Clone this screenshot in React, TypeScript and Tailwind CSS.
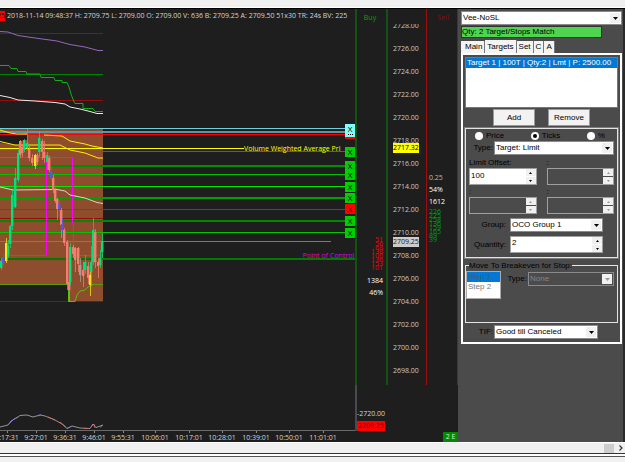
import { useState } from 'react';

type Candle = [x: number, high: number, low: number, top: number, bottom: number, color: string];

const UP = '#00e07c';
const DOWN = '#f47d72';
const YELLOW = '#f7e41c';
const BLUE = '#5b55f0';
const GRAY = '#a89c94';

const candles: Candle[] = [
  [1, 258, 270, 261, 268, UP],
  [3, 253, 266, 257, 264, BLUE],
  [6, 238, 263, 243, 261, YELLOW],
  [8, 240, 258, 246, 255, UP],
  [10, 225, 248, 226, 244, UP],
  [12, 190, 230, 195, 226, UP],
  [15, 168, 208, 178, 207, UP],
  [18, 150, 182, 153, 180, UP],
  [20, 140, 158, 141, 155, DOWN],
  [22, 145, 157, 147, 153, DOWN],
  [24, 139, 152, 140, 150, UP],
  [27, 129, 150, 143, 148, UP],
  [29, 146, 161, 149, 158, DOWN],
  [32, 154, 166, 158, 163, DOWN],
  [35, 154, 169, 155, 166, YELLOW],
  [37, 153, 165, 155, 162, DOWN],
  [39, 131, 157, 138, 152, UP],
  [42, 139, 160, 141, 152, DOWN],
  [44, 141, 163, 152, 158, DOWN],
  [47, 152, 170, 155, 162, UP],
  [49, 156, 172, 158, 170, DOWN],
  [51, 166, 182, 172, 178, BLUE],
  [53, 175, 193, 178, 190, DOWN],
  [55, 188, 203, 190, 201, DOWN],
  [57, 198, 220, 199, 209, DOWN],
  [59, 200, 219, 204, 209, BLUE],
  [61, 208, 238, 210, 225, DOWN],
  [62, 218, 234, 224, 230, BLUE],
  [64, 228, 246, 230, 243, DOWN],
  [67, 240, 290, 242, 284, DOWN],
  [69, 280, 302, 282, 290, DOWN],
  [70, 243, 285, 247, 282, UP],
  [73, 245, 258, 247, 254, DOWN],
  [75, 247, 272, 248, 260, DOWN],
  [78, 247, 272, 248, 264, DOWN],
  [80, 258, 282, 265, 275, GRAY],
  [83, 262, 287, 270, 276, DOWN],
  [85, 255, 274, 262, 270, UP],
  [88, 262, 284, 266, 278, DOWN],
  [90, 264, 296, 275, 285, YELLOW],
  [91, 246, 275, 262, 272, UP],
  [93, 218, 265, 230, 262, UP],
  [95, 229, 268, 232, 262, DOWN],
  [98, 258, 278, 262, 266, DOWN],
  [100, 250, 268, 258, 265, UP],
  [102, 233, 258, 241, 252, UP],
];

// y, thickness, color
const levels: [number, number, string][] = [
  [128, 1, '#6fd0dc'],
  [131, 2, '#5d97a3'],
  [134, 1, '#ff0000'],
  [151, 1, '#00a000'],
  [165, 2, '#008f00'],
  [174, 1, '#00c400'],
  [186, 1, '#00e800'],
  [197, 2, '#00a000'],
  [209, 1, '#e01010'],
  [220, 2, '#008a00'],
  [232, 1, '#00c800'],
  [258, 2, '#007a00'],
];

const cancelMarks = [
  { y: 147, color: 'bg-[#00d000]' },
  { y: 161, color: 'bg-[#00d000]' },
  { y: 170, color: 'bg-[#00d000]' },
  { y: 182, color: 'bg-[#00d000]' },
  { y: 193, color: 'bg-[#00d000]' },
  { y: 204, color: 'bg-[#ff0000]' },
  { y: 216, color: 'bg-[#00d000]' },
  { y: 228, color: 'bg-[#00d000]' },
];

const times: [number, string][] = [
  [7, '9:17:31'],
  [36, '9:27:01'],
  [65, '9:36:31'],
  [94, '9:46:01'],
  [123, '9:55:31'],
  [155, '10:06:01'],
  [189, '10:17:01'],
  [222, '10:28:01'],
  [256, '10:39:01'],
  [289, '10:50:01'],
  [323, '11:01:01'],
];

const prices = Array.from({ length: 16 }, (_, i) => (2728 - i * 2).toFixed(2));
const bidSizes = ['51', '56', '68', '138', '106', '136', '153', '101'];
const askSizes = ['226', '225', '258', '136', '159', '165', '89', '39'];

function Chart() {
  return (
    <div className="relative min-w-0 flex-1 overflow-hidden">
      <div className="flex h-[14px] items-center gap-[2px] whitespace-nowrap text-[7px] text-[#d4d4d4]">
        <span className="flex h-[10px] w-[5px] items-center justify-end overflow-hidden bg-[#ff0000] text-black">25</span>
        <span>2018-11-14 09:48:37 H: 2709.75 L: 2709.00 O: 2709.00 V: 636 B: 2709.25 A: 2709.50 51x30 TR: 24s BV: 225</span>
      </div>
      <svg className="block h-[419px] w-full" aria-label="Price chart">
        <g transform="translate(0 -23)" fill="none">
          <path d="M0 129H103V302H68V285H0V143L20 145V139L27 140V134L10 133L0 131Z" fill="#8e4d2d" />
          <path d="M0 133L27 134V140L20 141V145L0 142Z" fill="#1e1e1e" />
          <path d="M0 33.5H103M0 100.5H103M0 218.5H103M0 301.5H103" stroke="#960b0b" />
          <path d="M0 74.5H103" stroke="#008500" />
          <path d="M0 284.5H68M93 284.5H103" stroke="#5f9a10" />
          <path d="M0 157.5H47" stroke="#5f8a18" />

          <path d="M0 31.5L8 32L18 35.5L35 38L57 41L70 44.5L85 47L98 50.5H103" stroke="#9467bd" />
          <path d="M0 65.5H9L11 68.5H17L18 71.5H26L27 74H40L41 77.5H54L55 80.5H62V82.5H67L69 87L71 94L74 102L75 103.5H83V108.5H93L95 111.5H103" stroke="#10b010" />
          <path d="M0 95.5L10 97.5L18 100L35 101L55 102.5L65 104L70 107L80 109L90 111.5L97 113.5H103" stroke="#ececec" />

          {levels.map(([y, h, color]) => (
            <rect key={y} x="0" y={y} width="100%" height={h} fill={color} />
          ))}
          <path d="M0 241.5H331" stroke="#13a5aa" />
          <path d="M0 148.5H244" stroke="#ffff00" />

          <path d="M8 255.5H46.5V157.5H72.5V222L73.5 226V255.5H103" stroke="#ff00ff" />
          <path d="M0 187L13 190L57 189.5L65 191L70 195L85 198L97 202.5L103 203.5" stroke="#dcd2cd" />
          <path d="M0 130L10 133L17 134H27" stroke="#ffee00" />
          <path d="M44 135L62 136L70 141L85 144L92 146L103 148" stroke="#ffee00" />
          <path d="M0 141.5L15 145H60L70 150L85 153L98 158H103" stroke="#ffee00" />
          <path d="M68.5 284V301.5H75L77 295L80 291L84 290.5L88 287L93 284.5" stroke="#58c010" />

          {candles.map(([x, high, low, top, bottom, color], i) => (
            <g key={i} fill={color}>
              <rect x={x} y={high} width="1" height={low - high} opacity="0.75" />
              <rect x={x - 1} y={top} width="2.4" height={bottom - top} />
            </g>
          ))}

          <g strokeWidth="0.8">
            <path d="M0 427L8 425L11 421L18 417L20 415.5L27 415L33 417L40 415L45 416L55 420L62 424L67 428.5L72 426L80 428L90 428.5L93 424L96 427.5L103 425" stroke="#b5b0b0" />
            <path d="M9 424L14 419L18 417M38 416L41 414.5M67 428.5L71 426.5M92 426L93 424M100 427.5L103 425" stroke="#7e7eea" />
            <path d="M48 417L55 420M60 422L66 427M94 424L95 428M84 428.5H88" stroke="#ea6a6a" />
          </g>
          <path d="M0 430.5H4000" stroke="#6a6a6a" />
          {times.map(([x]) => (
            <path key={x} d={`M${x + 0.5} 431V433`} stroke="#8a8a8a" />
          ))}

          <g fontSize="7" fill="#d4d4d4" textAnchor="middle">
            {times.map(([x, label]) => (
              <text key={label} x={x} y="440">{label}</text>
            ))}
          </g>
          <text x="244" y="151" fontSize="7" fill="#ffff00">Volume Weighted Average Pri</text>
          <text x="100%" y="258" dx="-1" fontSize="7" fill="#e000e0" textAnchor="end">Point of Control</text>
        </g>
      </svg>

      {/* order handles pinned on their price level */}
      <div className="absolute right-0 top-[121px] h-[9px] w-[10px] bg-[#ff0000]" />
      <button aria-label="X" className="absolute right-0 top-[115px] flex h-[13px] w-[10px] flex-col items-center bg-[#80ffff] text-[8px] leading-[10px] text-black">
        X
        <span className="w-[5px] border-b border-dotted border-black" />
      </button>
      {cancelMarks.map(({ y, color }) => (
        <button
          key={y}
          className={`absolute right-0 flex h-[10px] w-[10px] items-center justify-center text-[8px] leading-[10px] text-black ${color}`}
          style={{ top: y - 9 }}
        >
          X
        </button>
      ))}
    </div>
  );
}

function Ladder() {
  return (
    <div className="flex w-[103px] shrink-0 flex-col text-[7px]">
      <div className="flex h-[376px]">
        <div className="flex w-[31px] flex-col items-end border-l-2 border-[#145214] pr-[3px] text-white">
          <span className="w-full pt-1 text-center leading-[9px] text-[#00a800]">Buy</span>
          <div className="mt-[216px] flex flex-col items-end text-[#f00000]">
            {bidSizes.map((size) => (
              <span key={size} className="leading-[4px]">{size}</span>
            ))}
          </div>
          <span className="mt-[5px] leading-[12px]">1384</span>
          <span className="leading-[12px]">46%</span>
        </div>
        <div className="relative w-[40px] border-l-2 border-[#145214]">
          <div className="mt-[15px] flex h-[356px] flex-col overflow-hidden pl-[5px] leading-[23px] text-[#c9c9c9]">
            <div className="-mt-[10px] flex flex-col">
              {prices.map((price) => (
                <span key={price} className="h-[23px]">{price}</span>
              ))}
            </div>
          </div>
          <span className="absolute left-[5px] top-[134px] bg-[#ffff00] leading-[10px] text-black">2717.32</span>
          <span className="absolute left-[5px] top-[228px] bg-[#cccccc] leading-[10px] text-[#222]">2709.25</span>
        </div>
        <div className="flex w-[32px] flex-col border-l border-r border-[#a00c0c] pl-[2px]">
          <span className="pt-1 text-center leading-[9px] text-[#a80000]">Sell</span>
          <span className="mt-[150px] leading-[12px] text-[#b8b8b8]">0.25</span>
          <span className="leading-[12px] text-white">54%</span>
          <span className="leading-[12px] text-white">1612</span>
          <div className="mt-[2px] flex flex-col text-[#00a000]">
            {askSizes.map((size) => (
              <span key={size} className="leading-[4px]">{size}</span>
            ))}
          </div>
        </div>
      </div>
      <div className="flex flex-1 flex-col">
        <div className="flex h-[46px] flex-col items-start border-l-2 border-[#4a4a4a] pt-[24px] text-[#d4d4d4]">
          <span className="leading-[10px]">-2720.00</span>
          <span className="mt-[2px] bg-[#ff0000] px-px leading-[10px] text-[#4a0000]">2709.25</span>
        </div>
        <div className="mt-auto flex justify-end">
          <span className="w-[15px] bg-[#008a00] text-center leading-[10px] text-[#d8f0d8]">2 E</span>
        </div>
      </div>
    </div>
  );
}

type ComboProps = { id: string; label: string; value: string; className: string; disabled?: boolean };

function Combo({ id, label, value, className, disabled }: ComboProps) {
  return (
    <div className={`relative flex h-[14px] border border-[#8a8a8a] ${disabled ? 'bg-[#4b4b4b]' : 'bg-white'} ${className}`}>
      <select
        id={id}
        aria-label={label}
        disabled={disabled}
        className={`w-full appearance-none pl-px text-[8px] leading-[12px] outline-none ${disabled ? 'text-[#858585]' : 'text-black'}`}
      >
        <option>{value}</option>
      </select>
      <span className="pointer-events-none absolute right-px top-px flex h-[10px] w-[10px] items-center justify-center bg-[#f0f0f0]">
        <svg width="5" height="3" viewBox="0 0 5 3">
          <path d="M0 0H5L2.5 3Z" fill={disabled ? '#999' : '#000'} />
        </svg>
      </span>
    </div>
  );
}

type SpinProps = { id: string; label: string; value?: string; className: string };

function Spin({ id, label, value = '', className }: SpinProps) {
  const [text, setText] = useState(value);
  const off = value === '';
  const arrow = off ? '#999' : '#000';

  return (
    <div className={`flex h-[17px] border border-[#a0a0a0] ${off ? 'bg-[#4b4b4b]' : 'bg-white'} ${className}`}>
      <input
        id={id}
        aria-label={label}
        disabled={off}
        value={text}
        onChange={(e) => setText(e.target.value)}
        className="h-[12px] w-0 min-w-0 flex-1 pl-px text-[8px] text-black outline-none"
      />
      <span className="flex w-[10px] flex-col gap-px">
        <button type="button" aria-label="Increase" disabled={off} className="flex flex-1 items-center justify-center bg-[#f0f0f0]">
          <svg width="3" height="2" viewBox="0 0 3 2"><path d="M0 2H3L1.5 0Z" fill={arrow} /></svg>
        </button>
        <button type="button" aria-label="Decrease" disabled={off} className="flex flex-1 items-center justify-center bg-[#f0f0f0]">
          <svg width="3" height="2" viewBox="0 0 3 2"><path d="M0 0H3L1.5 2Z" fill={arrow} /></svg>
        </button>
      </span>
    </div>
  );
}

function OrderPanel() {
  const [tab, setTab] = useState('Targets');
  const [unit, setUnit] = useState('Ticks');

  return (
    <aside className="flex w-[167px] shrink-0 flex-col border-r-2 border-[#2a2a2a] bg-[#4b4b4b] pl-[3px] pr-px pt-[2px] font-['Liberation_Sans',Arial,sans-serif] text-[8px] text-black">
      <Combo id="strategy" label="Strategy" value="Vee-NoSL" className="w-full" />
      <div className="mt-px h-[12px] w-[141px] border border-[#333] bg-[#4fd44f] leading-[10px]">Qty: 2 Target/Stops Match</div>

      <div className="mt-[2px] flex h-[13px] items-end leading-[12px]" role="tablist">
        {['Main', 'Targets', 'Set', 'C', 'A'].map((name) => (
          <button
            key={name}
            role="tab"
            aria-selected={tab === name}
            onClick={() => setTab(name)}
            className={`border-r border-[#777] bg-[#f4f4f4] px-[2px] first:pl-[4px] ${tab === name ? 'h-[13px]' : 'h-[12px]'}`}
          >
            {name}
          </button>
        ))}
      </div>

      <div className="flex flex-col border-2 border-white px-[2px] pb-[3px] pt-[2px]">
        <ul className="h-[51px] border border-[#777] bg-white">
          <li className="h-[10px] overflow-hidden whitespace-nowrap bg-[#0078d7] pl-px leading-[10px] text-white">
            Target 1 | 100T | Qty:2 | Lmt | P: 2500.00
          </li>
        </ul>
        <div className="mt-px flex justify-center gap-[13px]">
          <button className="h-[17px] w-[42px] border border-[#999] bg-[#f2f2f2]">Add</button>
          <button className="h-[17px] w-[42px] border border-[#999] bg-[#f2f2f2]">Remove</button>
        </div>

        <div className="mt-[2px] flex flex-col border border-[#e4e4e4] px-[3px] pb-[4px] pt-px outline outline-[#7c7c7c]">
          <div className="flex h-[11px] items-center justify-between pl-[6px] pr-[9px]">
            {['Price', 'Ticks', '%'].map((name) => (
              <label key={name} className="flex items-center gap-[3px] leading-[10px]">
                <input
                  type="radio"
                  name="unit"
                  checked={unit === name}
                  onChange={() => setUnit(name)}
                  className="h-[8px] w-[8px] appearance-none rounded-full border-2 border-white bg-white checked:bg-black"
                />
                {name}
              </label>
            ))}
          </div>
          <div className="flex items-center justify-end gap-px">
            <label htmlFor="type">Type:</label>
            <Combo id="type" label="Type" value="Target: Limit" className="w-[120px]" />
          </div>
          <div className="mt-[2px] grid grid-cols-2 gap-x-[10px] leading-[11px]">
            <label htmlFor="offset">Limit Offset:</label>
            <label htmlFor="offset2">:</label>
            <Spin id="offset" label="Limit Offset" value="100" className="w-full" />
            <Spin id="offset2" label=":" className="w-full" />
            <label htmlFor="extra1" className="pt-px">:</label>
            <label htmlFor="extra2" className="pt-px">:</label>
            <Spin id="extra1" label=":" className="w-full" />
            <Spin id="extra2" label=":" className="w-full" />
          </div>
          <div className="mt-[4px] flex flex-col gap-[4px] pr-[11px]">
            <div className="flex items-center justify-end gap-[4px]">
              <label htmlFor="group">Group:</label>
              <Combo id="group" label="Group" value="OCO Group 1" className="w-[93px]" />
            </div>
            <div className="flex items-center justify-end gap-[4px]">
              <label htmlFor="quantity">Quantity:</label>
              <Spin id="quantity" label="Quantity" value="2" className="w-[93px]" />
            </div>
          </div>
        </div>

        <fieldset className="mt-[3px] h-[62px] border border-[#e4e4e4]">
          <legend className="ml-[3px] leading-[9px]">Move To Breakeven for Stop:</legend>
          <div className="flex items-start justify-between pr-[3px] pt-px">
            <ul className="h-[28px] w-[35px] border border-[#aaa] bg-white pl-px leading-[10px] text-[#777]">
              <li className="-ml-px bg-[#0078d7] pl-px text-[#3d5f80]">Step 1</li>
              <li>Step 2</li>
            </ul>
            <div className="flex items-center gap-px pt-px">
              <label htmlFor="be-type">Type:</label>
              <Combo id="be-type" label="Type" value="None" disabled className="w-[86px]" />
            </div>
          </div>
        </fieldset>

        <div className="mt-[2px] flex items-center justify-end gap-px pr-[20px]">
          <label htmlFor="tif">TIF:</label>
          <Combo id="tif" label="TIF" value="Good till Canceled" className="w-[104px]" />
        </div>
      </div>
    </aside>
  );
}

export default function App() {
  return (
    <div className="flex flex-col bg-[#f0f0f0] font-['Open_Sans','Noto_Sans',sans-serif]">
      <div className="h-[8px] border-b border-[#ffffff]" />
      <main className="flex border-t border-black bg-[#1e1e1e]">
        <Chart />
        <Ladder />
        <OrderPanel />
      </main>
      <div className="flex h-[12px] items-center justify-end gap-[2px] border-b border-[#333] border-t border-t-white">
        <span className="h-[9px] w-[10px] bg-[#cdcdcd]" />
        <button aria-label="Scroll right" className="flex w-[9px] justify-center">
          <svg width="4" height="6" viewBox="0 0 4 6"><path d="M0.5 0.5L3 3L0.5 5.5" fill="none" stroke="#333" strokeWidth="1.2" /></svg>
        </button>
      </div>
      <div className="h-[3px] border-b border-[#555] bg-white" />
      <div className="h-[5px]" />
    </div>
  );
}
